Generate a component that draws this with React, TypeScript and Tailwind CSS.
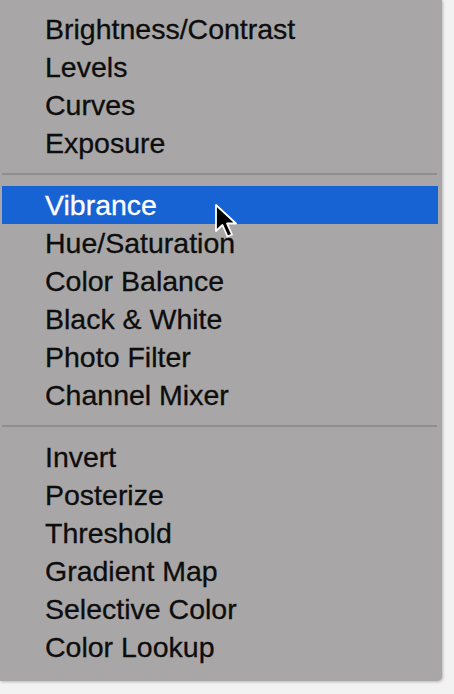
import React from 'react';

const GROUPS: string[][] = [
  ['Brightness/Contrast', 'Levels', 'Curves', 'Exposure'],
  ['Vibrance', 'Hue/Saturation', 'Color Balance', 'Black & White', 'Photo Filter', 'Channel Mixer'],
  ['Invert', 'Posterize', 'Threshold', 'Gradient Map', 'Selective Color', 'Color Lookup'],
];

function Cursor() {
  return (
    <svg width="28" height="36" viewBox="0 0 28 36" className="absolute left-[212px] top-[18px]">
      <path
        d="M2 1 L2 27 L8.5 21 L13.5 32.5 L18 30.5 L13 19.5 L22 19.5 Z"
        fill="#000"
        stroke="#fff"
        strokeWidth="1.8"
        strokeLinejoin="round"
      />
    </svg>
  );
}

export default function App() {
  return (
    <div className="w-[454px] h-[694px] bg-[#f2f2f2] overflow-hidden font-['Liberation_Sans',Arial,sans-serif]">
      <div className="w-[442px] h-[681px] bg-[#a8a6a6] rounded-br-[5px] shadow-[1px_1px_3px_rgba(0,0,0,0.25)] pt-[10px]">
        {GROUPS.map((group, gi) => (
          <div key={gi}>
            {gi > 0 && (
              <div className="py-[11px] pl-[2px] pr-[5px]">
                <div className="h-[2px] bg-[#8f8d8d]" />
              </div>
            )}
            {group.map((label) => {
              const active = label === 'Vibrance';
              return (
                <div key={label} className="pl-[2px] pr-[4px]">
                  <div
                    className={`relative h-[38px] flex items-center pl-[43px] text-[28.5px] leading-none [-webkit-text-stroke:0.3px_currentColor] ${
                      active ? 'bg-[#1863d4] text-white' : 'text-[#0d0d0d]'
                    }`}
                  >
                    {label}
                    {active && <Cursor />}
                  </div>
                </div>
              );
            })}
          </div>
        ))}
      </div>
    </div>
  );
}
